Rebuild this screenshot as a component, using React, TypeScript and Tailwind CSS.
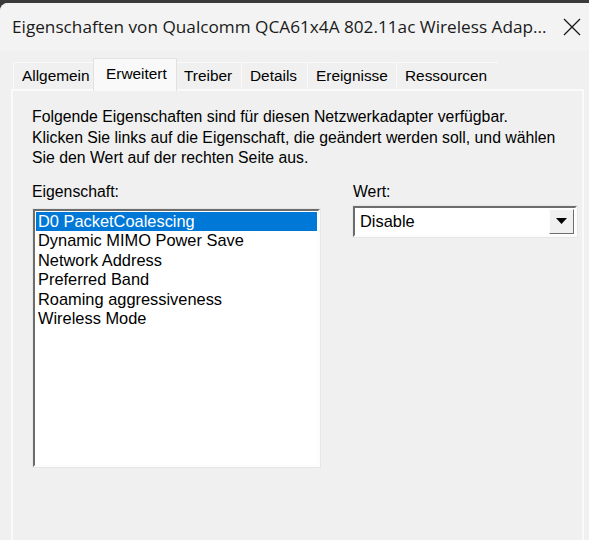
import React, {useState} from "react";

const tabs = [
    {label: "Allgemein", width: "w-[82px]"},
    {label: "Erweitert", width: "w-[84px]"},
    {label: "Treiber", width: "w-[66px]"},
    {label: "Details", width: "w-[66px]"},
    {label: "Ereignisse", width: "w-[89px]"},
    {label: "Ressourcen", width: "w-[102px]"},
];

const properties = [
    "D0 PacketCoalescing",
    "Dynamic MIMO Power Save",
    "Network Address",
    "Preferred Band",
    "Roaming aggressiveness",
    "Wireless Mode",
];

const CloseIcon: React.FC = () => (
    <svg width="18" height="18" viewBox="0 0 18 18" fill="none">
        <path d="M1 1L17 17M17 1L1 17" stroke="#1a1a1a" strokeWidth="1.3"/>
    </svg>
);

const App: React.FC = () => {
    const [activeTab, setActiveTab] = useState(1);
    const [selected, setSelected] = useState(0);

    return (
        <div className="w-[589px] h-[540px] overflow-hidden bg-[#3a3a3a] pt-[3px]">
            <div className="h-full rounded-tl-[8px] bg-[#f0f0f0] flex flex-col">
                {/* title bar */}
                <div className="h-[48px] flex items-center justify-between pl-[12px] pr-[8px] bg-[#f3f3f3] rounded-tl-[8px]">
                    <span className="font-['Open_Sans',sans-serif] text-[17.2px] text-[#1a1a1a] whitespace-nowrap">
                        Eigenschaften von Qualcomm QCA61x4A 802.11ac Wireless Adap...
                    </span>
                    <CloseIcon/>
                </div>

                {/* tabs */}
                <div className="flex items-end h-[38px] pl-[13px] font-['Liberation_Sans',Arial,sans-serif] text-[15.4px] text-black">
                    {tabs.map((tab, index) => (
                        <div
                            key={tab.label}
                            onClick={() => setActiveTab(index)}
                            className={
                                index === activeTab
                                    ? "relative z-10 h-[33px] -mx-[2px] px-[2px] -mb-[2px] bg-[#f9f9f9] border-l border-t border-r border-[#e2e2e2] flex items-start pt-[3px] " + tab.width
                                    : "h-[27px] bg-[#f0f0f0] border-l border-t border-[#fafafa] flex items-center " + tab.width
                            }
                        >
                            <span className={index === activeTab ? "pl-[10px]" : "pl-[8px]"}>{tab.label}</span>
                        </div>
                    ))}
                </div>

                {/* page */}
                <div className="flex-1 ml-[11px] mr-[5px] border-l-2 border-t-2 border-r-2 border-[#fafafa] bg-[#f0f0f0] pl-[20px] pr-[5px] pt-[16px] font-['Liberation_Sans',Arial,sans-serif] text-[15.8px] text-black">
                    <p className="leading-[20.5px] -ml-[1px]">
                        Folgende Eigenschaften sind für diesen Netzwerkadapter verfügbar.<br/>
                        Klicken Sie links auf die Eigenschaft, die geändert werden soll, und wählen<br/>
                        Sie den Wert auf der rechten Seite aus.
                    </p>

                    <div className="flex mt-[13px]">
                        <div className="w-[287px] shrink-0">
                            <div className="leading-[20px] -ml-[1px]">Eigenschaft:</div>
                            <div className="mt-[7px] h-[258px] bg-white border-2 border-l-[#6d6d6d] border-t-[#6d6d6d] border-r-[#fcfcfc] border-b-[#fcfcfc] shadow-[0_0_0_1px_#e6e6e6] p-[1px] text-[16.4px]">
                                {properties.map((name, index) => (
                                    <div
                                        key={name}
                                        onClick={() => setSelected(index)}
                                        className={
                                            index === selected
                                                ? "h-[19.6px] leading-[19.6px] pl-[2px] bg-[#0078d7] text-white"
                                                : "h-[19.6px] leading-[19.6px] pl-[2px]"
                                        }
                                    >
                                        {name}
                                    </div>
                                ))}
                            </div>
                        </div>

                        <div className="ml-[33px] w-[224px] shrink-0">
                            <div className="leading-[20px]">Wert:</div>
                            <div className="mt-[4px] h-[31px] bg-white border-2 border-l-[#6d6d6d] border-t-[#6d6d6d] border-r-[#fcfcfc] border-b-[#fcfcfc] shadow-[0_0_0_1px_#e6e6e6] flex items-center text-[16.4px]">
                                <span className="flex-1 pl-[5px]">Disable</span>
                                <div className="w-[25px] h-[25px] mr-[1px] bg-[#f0f0f0] border border-l-[#fdfdfd] border-t-[#fdfdfd] border-r-[#6d6d6d] border-b-[#6d6d6d] flex items-center justify-center">
                                    <svg width="11" height="6" viewBox="0 0 11 6">
                                        <path d="M0 0H11L5.5 6Z" fill="#000"/>
                                    </svg>
                                </div>
                            </div>
                        </div>
                    </div>
                </div>
            </div>
        </div>
    );
};

export default App;
